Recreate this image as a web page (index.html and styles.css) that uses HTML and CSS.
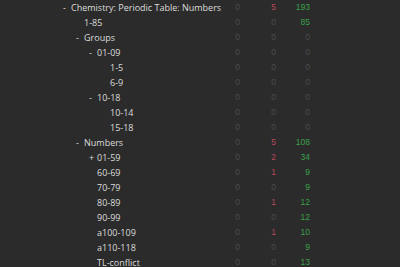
FILE: index.html
```html
<!DOCTYPE html>
<html>
<head>
<meta charset="utf-8">
<link rel="stylesheet" href="styles.css">
</head>
<body>
<div class="deck-list">
  <div class="row"><div class="name d0"><span class="tog">-</span>Chemistry: Periodic Table: Numbers</div><div class="c zero">0</div><div class="c red">5</div><div class="c green">193</div></div>
  <div class="row"><div class="name d1"><span class="tog"></span>1-85</div><div class="c zero">0</div><div class="c zero">0</div><div class="c green">85</div></div>
  <div class="row"><div class="name d1"><span class="tog">-</span>Groups</div><div class="c zero">0</div><div class="c zero">0</div><div class="c zero">0</div></div>
  <div class="row"><div class="name d2"><span class="tog">-</span>01-09</div><div class="c zero">0</div><div class="c zero">0</div><div class="c zero">0</div></div>
  <div class="row"><div class="name d3"><span class="tog"></span>1-5</div><div class="c zero">0</div><div class="c zero">0</div><div class="c zero">0</div></div>
  <div class="row"><div class="name d3"><span class="tog"></span>6-9</div><div class="c zero">0</div><div class="c zero">0</div><div class="c zero">0</div></div>
  <div class="row"><div class="name d2"><span class="tog">-</span>10-18</div><div class="c zero">0</div><div class="c zero">0</div><div class="c zero">0</div></div>
  <div class="row"><div class="name d3"><span class="tog"></span>10-14</div><div class="c zero">0</div><div class="c zero">0</div><div class="c zero">0</div></div>
  <div class="row"><div class="name d3"><span class="tog"></span>15-18</div><div class="c zero">0</div><div class="c zero">0</div><div class="c zero">0</div></div>
  <div class="row"><div class="name d1"><span class="tog">-</span>Numbers</div><div class="c zero">0</div><div class="c red">5</div><div class="c green">108</div></div>
  <div class="row"><div class="name d2"><span class="tog">+</span>01-59</div><div class="c zero">0</div><div class="c red">2</div><div class="c green">34</div></div>
  <div class="row"><div class="name d2"><span class="tog"></span>60-69</div><div class="c zero">0</div><div class="c red">1</div><div class="c green">9</div></div>
  <div class="row"><div class="name d2"><span class="tog"></span>70-79</div><div class="c zero">0</div><div class="c zero">0</div><div class="c green">9</div></div>
  <div class="row"><div class="name d2"><span class="tog"></span>80-89</div><div class="c zero">0</div><div class="c red">1</div><div class="c green">12</div></div>
  <div class="row"><div class="name d2"><span class="tog"></span>90-99</div><div class="c zero">0</div><div class="c zero">0</div><div class="c green">12</div></div>
  <div class="row"><div class="name d2"><span class="tog"></span>a100-109</div><div class="c zero">0</div><div class="c red">1</div><div class="c green">10</div></div>
  <div class="row"><div class="name d2"><span class="tog"></span>a110-118</div><div class="c zero">0</div><div class="c zero">0</div><div class="c green">9</div></div>
  <div class="row"><div class="name d2"><span class="tog"></span>TL-conflict</div><div class="c zero">0</div><div class="c zero">0</div><div class="c green">13</div></div>
</div>
</body>
</html>
```
FILE: styles.css
```css
html, body {
  margin: 0;
  padding: 0;
  background: #2b2b2b;
  height: 100%;
  overflow: hidden;
}
.deck-list {
  display: flex;
  flex-direction: column;
  font-family: "Open Sans", "Noto Sans", sans-serif;
  font-size: 9px;
  color: #dcdcdc;
}
.row {
  display: grid;
  grid-template-columns: 210px 30px 36px 34px;
  height: 15px;
  align-items: center;
  line-height: 15px;
}
.name {
  white-space: nowrap;
  display: flex;
}
.tog {
  display: inline-block;
  width: 8px;
  flex: none;
}
.d0 { padding-left: 63px; }
.d1 { padding-left: 76px; }
.d2 { padding-left: 89px; }
.d3 { padding-left: 102px; }
.c {
  text-align: right;
  font-family: "Liberation Sans", Arial, sans-serif;
  font-size: 8.5px;
}
.zero { color: #4c4c4c; }
.red { color: #b8485c; }
.green { color: #3aa04a; }
```
